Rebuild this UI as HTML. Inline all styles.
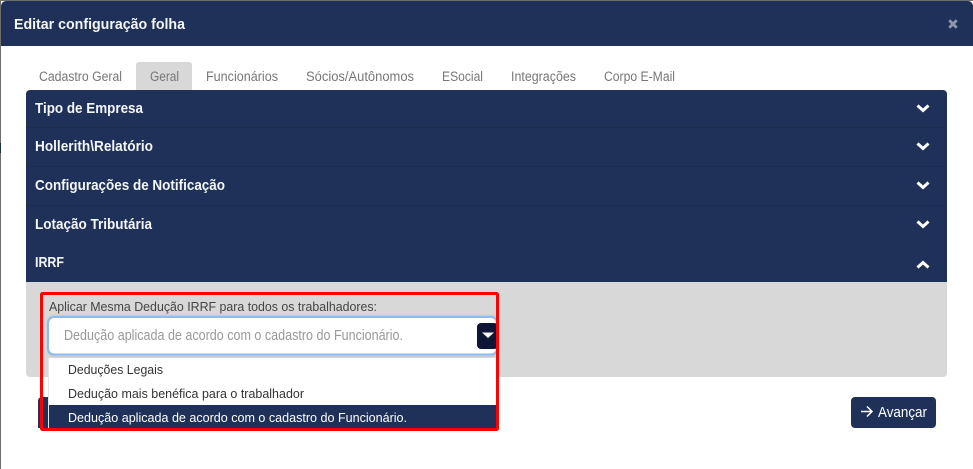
<!DOCTYPE html>
<html lang="pt">
<head>
<meta charset="utf-8">
<title>Editar configuração folha</title>
<style>
html,body{margin:0;padding:0;background:#fff;width:973px;height:469px;overflow:hidden}
svg{display:block}
text{font-family:"Liberation Sans",sans-serif}
.b{font-weight:700;fill:#f4f5f7}
.t{fill:#777;font-size:13.5px}
</style>
</head>
<body>
<svg width="973" height="469" viewBox="0 0 973 469" xmlns="http://www.w3.org/2000/svg">
<rect width="973" height="469" fill="#fff"/>
<rect x="0" y="0" width="973" height="1" fill="#6e6e6e"/>
<rect x="0" y="0" width="1" height="469" fill="#6e6e6e"/>
<rect x="0" y="143" width="1" height="10" fill="#1c2c4e"/>
<path d="M1 46V6a5 5 0 0 1 5-5H968a5 5 0 0 1 5 5V46Z" fill="#1f3158"/>
<text x="14" y="29" class="b" font-size="14.8" textLength="171" lengthAdjust="spacingAndGlyphs">Editar configuração folha</text>
<path d="M949.3 20.300L956.700 27.700M956.700 20.300L949.300 27.700" stroke="#8f98aa" stroke-width="2.800" fill="none"/>

<path d="M136 90V65a3 3 0 0 1 3-3H189a3 3 0 0 1 3 3V90Z" fill="#d8d8d8"/>
<text x="39" y="81" class="t" textLength="83" lengthAdjust="spacingAndGlyphs">Cadastro Geral</text>
<text x="150" y="81" class="t" textLength="29" lengthAdjust="spacingAndGlyphs">Geral</text>
<text x="206" y="81" class="t" textLength="72" lengthAdjust="spacingAndGlyphs">Funcionários</text>
<text x="306" y="81" class="t" textLength="108" lengthAdjust="spacingAndGlyphs">Sócios/Autônomos</text>
<text x="442" y="81" class="t" textLength="41" lengthAdjust="spacingAndGlyphs">ESocial</text>
<text x="511" y="81" class="t" textLength="65" lengthAdjust="spacingAndGlyphs">Integrações</text>
<text x="604" y="81" class="t" textLength="71" lengthAdjust="spacingAndGlyphs">Corpo E-Mail</text>

<path d="M26 282V94a4 4 0 0 1 4-4H943a4 4 0 0 1 4 4V282Z" fill="#1f3158"/>
<path d="M26 282H947V373a4 4 0 0 1-4 4H30a4 4 0 0 1-4-4Z" fill="#d8d8d8"/>
<rect x="26" y="127" width="921" height="1" fill="#1b2c4f"/>
<rect x="26" y="166" width="921" height="1" fill="#1b2c4f"/>
<rect x="26" y="205" width="921" height="1" fill="#1b2c4f"/>

<text x="35" y="113" class="b" font-size="14.800" textLength="108" lengthAdjust="spacingAndGlyphs">Tipo de Empresa</text>
<text x="35" y="151" class="b" font-size="14.800" textLength="118" lengthAdjust="spacingAndGlyphs">Hollerith\Relatório</text>
<text x="35" y="190" class="b" font-size="14.800" textLength="190" lengthAdjust="spacingAndGlyphs">Configurações de Notificação</text>
<text x="35" y="229" class="b" font-size="14.800" textLength="117" lengthAdjust="spacingAndGlyphs">Lotação Tributária</text>
<text x="35" y="267" class="b" font-size="14.800" textLength="29" lengthAdjust="spacingAndGlyphs">IRRF</text>

<g fill="none" stroke="#fff" stroke-width="3">
<path d="M917.500 105.500L923 110.500L928.500 105.500"/>
<path d="M917.500 143.500L923 148.500L928.500 143.500"/>
<path d="M917.500 182.500L923 187.500L928.500 182.500"/>
<path d="M917.500 221.500L923 226.500L928.500 221.500"/>
<path d="M917.500 267.500L923 262.500L928.500 267.500"/>
</g>

<text x="49" y="311" font-size="13" fill="#444" textLength="328" lengthAdjust="spacingAndGlyphs">Aplicar Mesma Dedução IRRF para todos os trabalhadores:</text>

<rect x="46.500" y="314.500" width="453" height="43" rx="8" fill="#c9ced6"/>
<rect x="48" y="317" width="449" height="37.500" rx="6" fill="#fff" stroke="#8fbcf0" stroke-width="2"/>
<text x="64" y="340" font-size="14.500" fill="#999" textLength="339" lengthAdjust="spacingAndGlyphs">Dedução aplicada de acordo com o cadastro do Funcionário.</text>
<rect x="477" y="323" width="21" height="26" rx="4" fill="#0e1638"/>
<path d="M482 332.500H494L488 338Z" fill="#fff"/>

<path d="M38 428V401a4 4 0 0 1 4-4H49V428Z" fill="#1f3158"/>
<rect x="49" y="358" width="447" height="47" fill="#fff"/>
<rect x="49" y="405" width="447" height="24" fill="#1f3158"/>
<rect x="48" y="358" width="1" height="71" fill="#e6e6e6"/>
<text x="68" y="374" font-size="13" fill="#333" textLength="95" lengthAdjust="spacingAndGlyphs">Deduções Legais</text>
<text x="68" y="398" font-size="13" fill="#333" textLength="236" lengthAdjust="spacingAndGlyphs">Dedução mais benéfica para o trabalhador</text>
<text x="68" y="422" font-size="13" fill="#fff" textLength="339" lengthAdjust="spacingAndGlyphs">Dedução aplicada de acordo com o cadastro do Funcionário.</text>

<rect x="41.500" y="293.500" width="456" height="136" fill="none" stroke="#fe0000" stroke-width="3" rx="1"/>

<rect x="851" y="397" width="85" height="31" rx="4" fill="#1f3158"/>
<path d="M861 411.500H871.500M867 406.500L872 411.500L867 416.500" fill="none" stroke="#fff" stroke-width="1.500"/>
<text x="878" y="417" font-size="14.500" fill="#fff" textLength="49" lengthAdjust="spacingAndGlyphs">Avançar</text>
</svg>
</body>
</html>
